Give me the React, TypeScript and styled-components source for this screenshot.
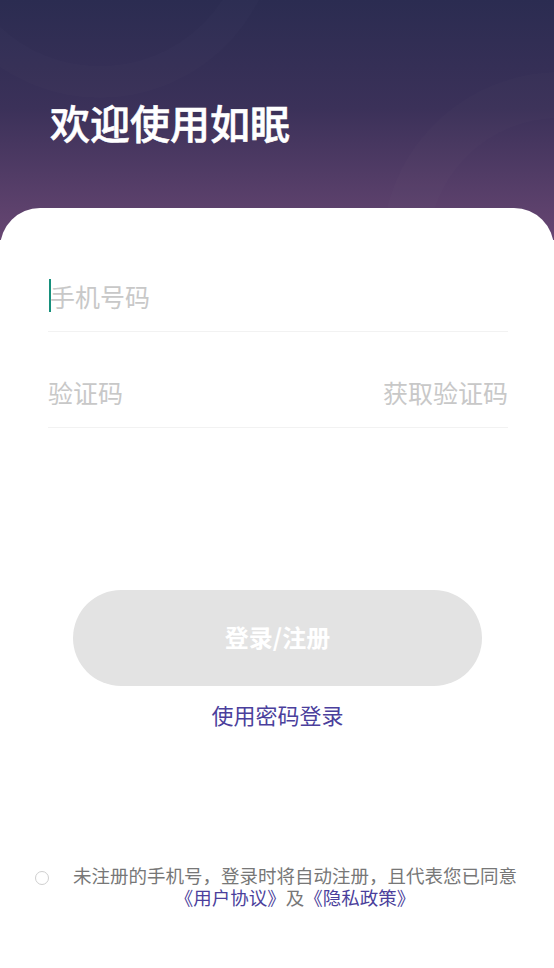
import React from 'react';
import styled, { createGlobalStyle } from 'styled-components';

const GlobalStyle = createGlobalStyle`
	html, body {
		margin: 0;
		padding: 0;
		background: #ffffff;
	}
	body {
		font-family: 'Noto Sans CJK SC', 'Noto Sans', sans-serif;
	}
	* {
		box-sizing: border-box;
	}
`;

const Page = styled.div`
	width: 554px;
	min-height: 968px;
	display: flex;
	flex-direction: column;
	background: linear-gradient(180deg, #2b2c51 0%, #3b3159 45%, #674672 100%);
	background-size: 100% 240px;
	background-repeat: no-repeat;
	overflow: hidden;
	position: relative;
`;

const Header = styled.header`
	position: relative;
	height: 208px;
	padding: 98px 0 0 50px;
`;

const Ring = styled.div<{ $x: number; $y: number; $size: number; $band: number }>`
	position: absolute;
	left: ${p => p.$x - p.$size / 2}px;
	top: ${p => p.$y - p.$size / 2}px;
	width: ${p => p.$size}px;
	height: ${p => p.$size}px;
	border-radius: 50%;
	border: ${p => p.$band}px solid rgba(255, 255, 255, 0.012);
	pointer-events: none;
`;

const Title = styled.h1`
	position: relative;
	margin: 0;
	font-size: 40px;
	line-height: 48px;
	font-weight: 500;
	color: #ffffff;
	-webkit-text-stroke: 0.6px #ffffff;
`;

const Card = styled.main`
	position: relative;
	flex: 1;
	display: flex;
	flex-direction: column;
	background: #ffffff;
	border-radius: 40px 40px 0 0;
	padding-top: 28px;
`;

const Form = styled.div`
	padding: 0 46px 0 48px;
`;

const Field = styled.div`
	height: 96px;
	display: flex;
	align-items: flex-end;
	justify-content: space-between;
	padding-bottom: 19px;
	border-bottom: 1px solid #f2f2f2;
`;

const Placeholder = styled.span`
	display: flex;
	align-items: center;
	font-size: 25px;
	line-height: 32px;
	color: #c8c8c8;
`;

const Caret = styled.span`
	display: inline-block;
	width: 2px;
	height: 33px;
	margin: 0 -1px 0 1px;
	background: #17907c;
`;

const CodeButton = styled.span`
	font-size: 25px;
	line-height: 32px;
	color: #c8c8c8;
`;

const Actions = styled.div`
	display: flex;
	flex-direction: column;
	align-items: center;
	padding: 162px 72px 0 73px;
`;

const SubmitButton = styled.button`
	width: 100%;
	height: 96px;
	padding: 0 0 3px;
	border: none;
	border-radius: 48px;
	background: #e3e3e3;
	color: #ffffff;
	font-family: inherit;
	font-size: 24px;
	font-weight: 700;
`;

const LinkText = styled.span`
	color: #4b3f9c;
`;

const PasswordLogin = styled(LinkText)`
	margin-top: 13px;
	font-size: 22px;
	line-height: 30px;
`;

const Agreement = styled.footer`
	display: flex;
	align-items: flex-start;
	margin-top: 136px;
	padding: 0 34px 0 35px;
`;

const Radio = styled.span`
	flex: none;
	width: 14px;
	height: 14px;
	margin-top: 6px;
	border-radius: 50%;
	border: 1px solid #cfcfcf;
`;

const AgreementText = styled.p`
	flex: 1;
	margin: -1px 0 0 21px;
	font-size: 18.5px;
	line-height: 22px;
	color: #777777;
	text-align: center;
`;

const App: React.FC = () => {
	return (
		<Page>
			<GlobalStyle />
			<Header>
				<Ring $x={100} $y={-80} $size={356} $band={32} />
				<Ring $x={560} $y={250} $size={356} $band={46} />
				<Title>欢迎使用如眠</Title>
			</Header>
			<Card>
				<Form>
					<Field>
						<Placeholder>
							<Caret />
							手机号码
						</Placeholder>
					</Field>
					<Field>
						<Placeholder>验证码</Placeholder>
						<CodeButton>获取验证码</CodeButton>
					</Field>
				</Form>
				<Actions>
					<SubmitButton>登录/注册</SubmitButton>
					<PasswordLogin>使用密码登录</PasswordLogin>
				</Actions>
				<Agreement>
					<Radio />
					<AgreementText>
						未注册的手机号，登录时将自动注册，且代表您已同意
						<br />
						<LinkText>《用户协议》</LinkText>及<LinkText>《隐私政策》</LinkText>
					</AgreementText>
				</Agreement>
			</Card>
		</Page>
	);
};

export default App;
